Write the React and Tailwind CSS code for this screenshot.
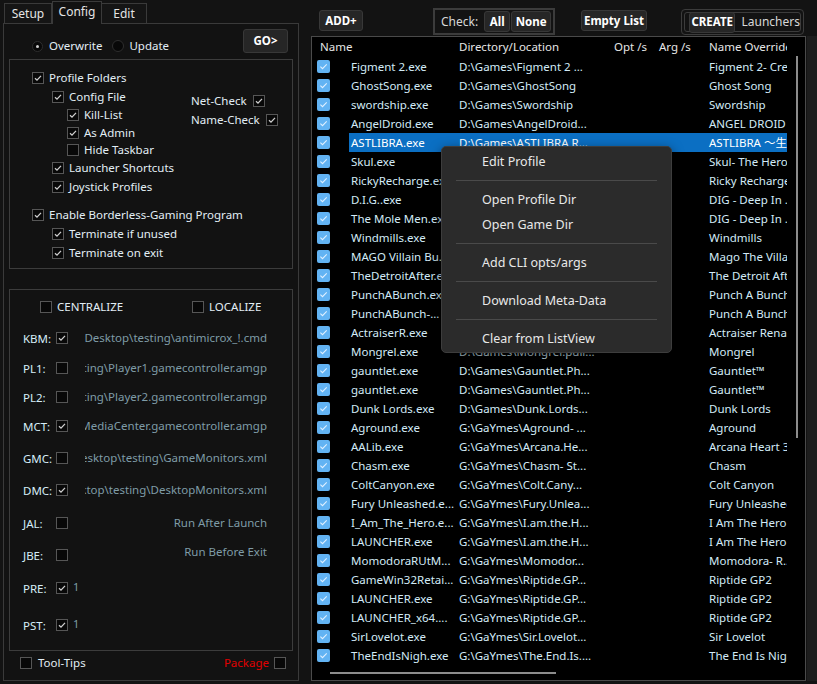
import React from 'react';

const rows = [
    ['Figment 2.exe', 'D:\\Games\\Figment 2 ...', 'Figment 2- Creed Valley'],
    ['GhostSong.exe', 'D:\\Games\\GhostSong', 'Ghost Song'],
    ['swordship.exe', 'D:\\Games\\Swordship', 'Swordship'],
    ['AngelDroid.exe', 'D:\\Games\\AngelDroid...', 'ANGEL DROID'],
    ['ASTLIBRA.exe', 'D:\\Games\\ASTLIBRA R...', 'ASTLIBRA ～生きた証～ Revision'],
    ['Skul.exe', 'D:\\Games\\Skul- The...', 'Skul- The Hero Slayer'],
    ['RickyRecharge.exe', 'D:\\Games\\Ricky.Rech...', 'Ricky Recharge'],
    ['D.I.G..exe', 'D:\\Games\\DIG- Deep...', 'DIG - Deep In ...'],
    ['The Mole Men.exe', 'D:\\Games\\DIG- Deep...', 'DIG - Deep In ...'],
    ['Windmills.exe', 'D:\\Games\\Windmills', 'Windmills'],
    ['MAGO Villain Bu...', 'D:\\Games\\MAGO.The...', 'Mago The Villain'],
    ['TheDetroitAfter.exe', 'D:\\Games\\The.Detroi...', 'The Detroit After'],
    ['PunchABunch.exe', 'D:\\Games\\Punch.A.B...', 'Punch A Bunch'],
    ['PunchABunch-...', 'D:\\Games\\Punch.A.B...', 'Punch A Bunch'],
    ['ActraiserR.exe', 'D:\\Games\\Actraiser...', 'Actraiser Renaissance'],
    ['Mongrel.exe', 'D:\\Games\\Mongrel.pull...', 'Mongrel'],
    ['gauntlet.exe', 'D:\\Games\\Gauntlet.Ph...', 'Gauntlet™'],
    ['gauntlet.exe', 'D:\\Games\\Gauntlet.Ph...', 'Gauntlet™'],
    ['Dunk Lords.exe', 'D:\\Games\\Dunk.Lords...', 'Dunk Lords'],
    ['Aground.exe', 'G:\\GaYmes\\Aground- ...', 'Aground'],
    ['AALib.exe', 'G:\\GaYmes\\Arcana.He...', 'Arcana Heart 3'],
    ['Chasm.exe', 'G:\\GaYmes\\Chasm- St...', 'Chasm'],
    ['ColtCanyon.exe', 'G:\\GaYmes\\Colt.Cany...', 'Colt Canyon'],
    ['Fury Unleashed.e...', 'G:\\GaYmes\\Fury.Unlea...', 'Fury Unleashed'],
    ['I_Am_The_Hero.e...', 'G:\\GaYmes\\I.am.the.H...', 'I Am The Hero'],
    ['LAUNCHER.exe', 'G:\\GaYmes\\I.am.the.H...', 'I Am The Hero'],
    ['MomodoraRUtM...', 'G:\\GaYmes\\Momodor...', 'Momodora- R...'],
    ['GameWin32Retai...', 'G:\\GaYmes\\Riptide.GP...', 'Riptide GP2'],
    ['LAUNCHER.exe', 'G:\\GaYmes\\Riptide.GP...', 'Riptide GP2'],
    ['LAUNCHER_x64....', 'G:\\GaYmes\\Riptide.GP...', 'Riptide GP2'],
    ['SirLovelot.exe', 'G:\\GaYmes\\Sir.Lovelot...', 'Sir Lovelot'],
    ['TheEndIsNigh.exe', 'G:\\GaYmes\\The.End.Is....', 'The End Is Nigh'],
];

// KBM / PL1 ... rijen in de tweede groep
const slots = [
    { k: 'KBM:', on: true, mt: 'mt-[11px]', path: 'r\\Desktop\\testing\\antimicrox_!.cmd' },
    { k: 'PL1:', on: false, mt: 'mt-[10px]', path: 'esting\\Player1.gamecontroller.amgp' },
    { k: 'PL2:', on: false, mt: 'mt-[9px]', path: 'esting\\Player2.gamecontroller.amgp' },
    { k: 'MCT:', on: true, mt: 'mt-[9px]', path: 'g\\MediaCenter.gamecontroller.amgp' },
    { k: 'GMC:', on: false, mt: 'mt-[12px]', path: 'Desktop\\testing\\GameMonitors.xml' },
    { k: 'DMC:', on: true, mt: 'mt-[12px]', path: 'sktop\\testing\\DesktopMonitors.xml' },
    { k: 'JAL:', on: false, mt: 'mt-[13px]', path: 'Run After Launch' },
    { k: 'JBE:', on: false, mt: 'mt-[12px]', path: 'Run Before Exit', up: true },
    { k: 'PRE:', on: true, mt: 'mt-[13px]', one: true },
    { k: 'PST:', on: true, mt: 'mt-[17px]', one: true },
];

function Box({ on }) {
    return (
        <span className="w-[12px] h-[12px] shrink-0 border border-[#565656] bg-[#080808] flex">
            {on && (
                <svg viewBox="0 0 10 10" className="w-full h-full">
                    <path d="M2 5.2 L4 7.1 L8 2.9" fill="none" stroke="#cfcfcf" strokeWidth="1.3" />
                </svg>
            )}
        </span>
    );
}

function BlueBox() {
    return (
        <span className="w-[13px] h-[13px] rounded-[2px] bg-[#62b3f3] flex shrink-0">
            <svg viewBox="0 0 13 13" className="w-full h-full">
                <path d="M3.4 6.7 L5.5 8.7 L9.7 4.4" fill="none" stroke="#dff0ff" strokeWidth="1.1" />
            </svg>
        </span>
    );
}

function Check({ on = true, label, h, pl = '' }) {
    return (
        <div className={`flex items-center gap-[5px] ${h} ${pl}`}>
            <Box on={on} />
            <span className="text-[#e2eef5]">{label}</span>
        </div>
    );
}

function Btn({ children, className = '' }) {
    return (
        <div className={`h-[21px] rounded-[3px] bg-[#262626] border border-[#383838] text-white text-[11.5px] font-bold flex items-center justify-center ${className}`}>
            {children}
        </div>
    );
}

function LeftPanel() {
    return (
        <div className="w-[300px] shrink-0 pl-[3px] flex flex-col">
            {/* tabs */}
            <div className="h-[23px] flex items-end pl-[1px] text-[12px] text-[#e4e4e4]">
                <div className="w-[48px] h-[20px] border border-b-0 border-[#3a3a3a] bg-[#151515] flex items-center justify-center">Setup</div>
                <div className="w-[50px] h-[23px] border border-b-0 border-[#3a3a3a] bg-[#121212] flex items-center justify-center pb-[3px] -mb-px relative z-10">Config</div>
                <div className="w-[45px] h-[20px] border border-b-0 border-l-0 border-[#3a3a3a] bg-[#151515] flex items-center justify-center">Edit</div>
            </div>

            <div className="w-[296px] h-[658px] border border-[#3a3a3a] bg-[#121212] text-[11.5px]">
                {/* Overwrite / Update + GO */}
                <div className="h-[35px] flex items-start">
                    <div className="ml-[28px] mt-[12px] h-[20px] flex items-center text-[#e2eef5]">
                        <span className="w-[11px] h-[11px] rounded-full border border-[#2e2e2e] bg-[#080808] flex items-center justify-center">
                            <span className="w-[3px] h-[3px] rounded-full bg-[#d0d0d0]" />
                        </span>
                        <span className="ml-[6px]">Overwrite</span>
                        <span className="ml-[10px] w-[12px] h-[12px] rounded-full border border-[#2e2e2e] bg-[#080808]" />
                        <span className="ml-[5px]">Update</span>
                    </div>
                    <Btn className="ml-auto mr-[10px] mt-[5px] w-[45px] h-[24px]">GO&gt;</Btn>
                </div>

                {/* Profiel-opties */}
                <div className="ml-[5px] w-[284px] h-[210px] border border-[#3c3c3c] pt-[8px] pl-[22px]">
                    <div className="flex">
                        <div className="w-[159px] flex flex-col">
                            <Check label="Profile Folders" h="h-[19px]" />
                            <Check label="Config File" h="h-[19px]" pl="pl-[20px]" />
                            <Check label="Kill-List" h="h-[18px]" pl="pl-[35px]" />
                            <Check label="As Admin" h="h-[17px]" pl="pl-[35px]" />
                            <Check on={false} label="Hide Taskbar" h="h-[17px]" pl="pl-[35px]" />
                            <Check label="Launcher Shortcuts" h="h-[19px]" pl="pl-[20px]" />
                            <Check label="Joystick Profiles" h="h-[19px]" pl="pl-[20px]" />
                        </div>
                        <div className="mt-[23px] flex flex-col text-[#e2eef5]">
                            <div className="h-[19px] flex items-center gap-[6px]">Net-Check <Box on /></div>
                            <div className="h-[19px] flex items-center gap-[6px]">Name-Check <Box on /></div>
                        </div>
                    </div>
                    <div className="mt-[9px] flex flex-col">
                        <Check label="Enable Borderless-Gaming Program" h="h-[19px]" />
                        <Check label="Terminate if unused" h="h-[19px]" pl="pl-[20px]" />
                        <Check label="Terminate on exit" h="h-[19px]" pl="pl-[20px]" />
                    </div>
                </div>

                {/* Controller / monitor bestanden */}
                <div className="ml-[5px] mt-[20px] w-[284px] h-[362px] border border-[#3c3c3c] pt-[7px]">
                    <div className="h-[20px] flex items-center pl-[30px]">
                        <div className="w-[152px] flex items-center gap-[5px]">
                            <Box /> <span className="text-[#e2eef5]">CENTRALIZE</span>
                        </div>
                        <div className="flex items-center gap-[5px]">
                            <Box /> <span className="text-[#e2eef5]">LOCALIZE</span>
                        </div>
                    </div>
                    {slots.map((s) => (
                        <div key={s.k} className={`h-[20px] flex items-center pl-[13px] ${s.mt}`}>
                            <span className="w-[33px] text-[#d6eef9] pt-[2px]">{s.k}</span>
                            <Box on={s.on} />
                            {s.one && <span className="ml-[5px] text-[#7f9ca7] text-[11px] -mt-[2px]">1</span>}
                            {s.path && (
                                <div className={`ml-[17px] w-[182px] overflow-hidden flex justify-end whitespace-nowrap text-[#7f9ca7] ${s.up ? '-mt-[6px]' : ''}`}>
                                    <span className="shrink-0">{s.path}</span>
                                </div>
                            )}
                        </div>
                    ))}
                </div>

                <div className="mt-[2px] h-[20px] flex items-center pl-[16px] pr-[12px]">
                    <Box />
                    <span className="ml-[6px] text-[#e2eef5]">Tool-Tips</span>
                    <span className="ml-auto text-[#e00000]">Package</span>
                    <span className="ml-[5px]"><Box /></span>
                </div>
            </div>
        </div>
    );
}

function GameList() {
    return (
        <div className="relative ml-[11px] w-[495px] h-[645px] border border-[#4a4a4a] bg-black overflow-hidden text-[11.5px]">
            <div className="h-[20px] flex items-center text-[#e6e6e6] whitespace-nowrap">
                <div className="w-[145px] pl-[8px]">Name</div>
                <div className="w-[155px] pl-[2px]">Directory/Location</div>
                <div className="w-[45px] pl-[2px]">Opt /s</div>
                <div className="w-[50px] pl-[2px]">Arg /s</div>
                <div className="w-[80px] pl-[2px] overflow-hidden">Name Override</div>
            </div>
            {rows.map(([name, dir, over], i) => {
                const sel = i === 4;
                return (
                    <div key={i} className="h-[19px] flex items-center whitespace-nowrap text-[#d3ebf7]">
                        <div className="w-[37px] pl-[5px] flex items-center"><BlueBox /></div>
                        <div className={`w-[438px] h-full flex items-center ${sel ? 'bg-[#0b6fc3] text-white' : ''}`}>
                            <div className="w-[108px] pl-[2px] overflow-hidden">{name}</div>
                            <div className="w-[155px] pl-[2px] overflow-hidden">{dir}</div>
                            <div className="w-[45px]" />
                            <div className="w-[50px]" />
                            <div className="w-[80px] pl-[2px] overflow-hidden font-['Noto_Sans','Noto_Sans_CJK_JP',sans-serif]">{over}</div>
                        </div>
                    </div>
                );
            })}
            {/* scrollbars */}
            <div className="absolute left-[484px] top-[19px] w-[2px] h-[382px] bg-[#8c8c8c]" />
            <div className="absolute left-[18px] top-[635px] w-[226px] h-[2px] bg-[#8c8c8c]" />
        </div>
    );
}

function ContextMenu() {
    const Item = ({ children }) => (
        <div className="h-[25px] flex items-center pl-[40px] text-[#e8e8e8]">{children}</div>
    );
    const Sep = () => (
        <div className="h-[13px] pt-[5px] px-[14px]"><div className="h-px bg-[#4a4a4a]" /></div>
    );
    return (
        <div className="absolute left-[441px] top-[146px] w-[231px] h-[207px] rounded-[5px] bg-[#2b2b2b] border border-[#3d3d3d] shadow-[0_4px_12px_rgba(0,0,0,0.6)] pt-[3px] text-[12.5px]">
            <Item>Edit Profile</Item>
            <Sep />
            <Item>Open Profile Dir</Item>
            <Item>Open Game Dir</Item>
            <Sep />
            <Item>Add CLI opts/args</Item>
            <Sep />
            <Item>Download Meta-Data</Item>
            <Sep />
            <Item>Clear from ListView</Item>
        </div>
    );
}

export default function App() {
    return (
        <div className="relative w-[817px] h-[684px] bg-[#131313] flex overflow-hidden font-['Noto_Sans','Liberation_Sans',sans-serif]">
            <LeftPanel />

            <div className="flex-1 flex flex-col">
                {/* toolbar */}
                <div className="h-[36px] flex items-start">
                    <Btn className="ml-[19px] mt-[10px] w-[44px]">ADD+</Btn>
                    <div className="ml-[70px] mt-[8px] w-[122px] h-[27px] border-2 border-[#3c3c3c] flex items-center pl-[6px] text-[12px]">
                        <span className="text-[#d8d8d8] mr-[6px]">Check:</span>
                        <Btn className="w-[26px]">All</Btn>
                        <Btn className="w-[40px] ml-px">None</Btn>
                    </div>
                    <Btn className="ml-[26px] mt-[10px] w-[66px]">Empty List</Btn>
                    <div className="ml-[34px] mt-[9px] w-[123px] h-[26px] rounded-[4px] border border-[#3c3c3c] p-[2px]">
                        <div className="w-full h-full rounded-[3px] border border-[#3c3c3c] flex items-center pl-[4px]">
                            <Btn className="w-[49px] h-[19px]">CREATE</Btn>
                            <span className="ml-[6px] text-[12px] text-[#d8d8d8]">Launchers</span>
                        </div>
                    </div>
                </div>
                <div className="flex">
                    <GameList />
                    <div className="ml-[1px] w-[11px] h-[645px] bg-[#1d1d1d]" />
                </div>
            </div>

            <ContextMenu />
        </div>
    );
}
